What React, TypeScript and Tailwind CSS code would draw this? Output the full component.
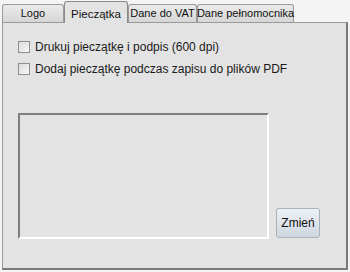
import React from "react";

const font = { fontFamily: '"Liberation Sans", Arial, sans-serif' };

function Tab({ label, w, selected }: { label: string; w: string; selected?: boolean }) {
  return (
    <div
      className={
        selected
          ? `${w} h-[22px] -mb-px z-10 flex items-start justify-center pt-[4px] border border-b-0 border-[#8a8a8a] rounded-t-[3px] bg-[#e3e3e3] text-[11.5px] text-[#111] whitespace-nowrap`
          : `${w} h-[18px] mt-[4px] flex items-center justify-center border border-b-0 border-[#9a9a9a] rounded-t-[3px] bg-gradient-to-b from-[#ebebeb] to-[#d6d6d6] text-[11px] text-[#111] whitespace-nowrap`
      }
    >
      {label}
    </div>
  );
}

function Check({ label }: { label: string }) {
  return (
    <div className="flex items-center gap-[5px] h-[14px]">
      <div className="w-[12px] h-[12px] border border-[#8e8e8e] bg-gradient-to-br from-[#dcdcdc] to-[#f7f7f7]" />
      <span className="text-[12px] text-[#1a1a1a] whitespace-nowrap">{label}</span>
    </div>
  );
}

export default function App() {
  return (
    <div className="w-[350px] h-[272px] bg-[#f4f4f4] px-[2px] pt-0 flex flex-col" style={font}>
      <div className="flex items-end h-[22px] pl-0">
        <Tab label="Logo" w="w-[62px]" />
        <Tab label="Pieczątka" w="w-[64px]" selected />
        <Tab label="Dane do VAT" w="w-[69px]" />
        <Tab label="Dane pełnomocnika" w="w-[97px]" />
      </div>
      <div className="flex-1 mb-[2px] border border-[#9a9a9a] border-r-[2px] border-r-[#7a7a7a] border-b-[2px] border-b-[#7a7a7a] bg-[#e3e3e3] flex flex-col pl-[15px] pt-[17px]">
        <div className="flex flex-col gap-[8px]">
          <Check label="Drukuj pieczątkę i podpis (600 dpi)" />
          <Check label="Dodaj pieczątkę podczas zapisu do plików PDF" />
        </div>
        <div className="flex items-end gap-[7px] mt-[37px]">
          <div className="w-[251px] h-[126px] border-t-2 border-l-2 border-t-[#7f7f7f] border-l-[#7f7f7f] border-b-2 border-r-2 border-b-white border-r-white bg-[#e3e3e3]" />
          <div className="w-[44px] h-[30px] mb-[1px] rounded-[3px] border border-[#a8b0b8] bg-gradient-to-b from-[#eef2f6] to-[#cdd6de] flex items-center justify-center text-[12px] text-[#111]">
            Zmień
          </div>
        </div>
      </div>
    </div>
  );
}
